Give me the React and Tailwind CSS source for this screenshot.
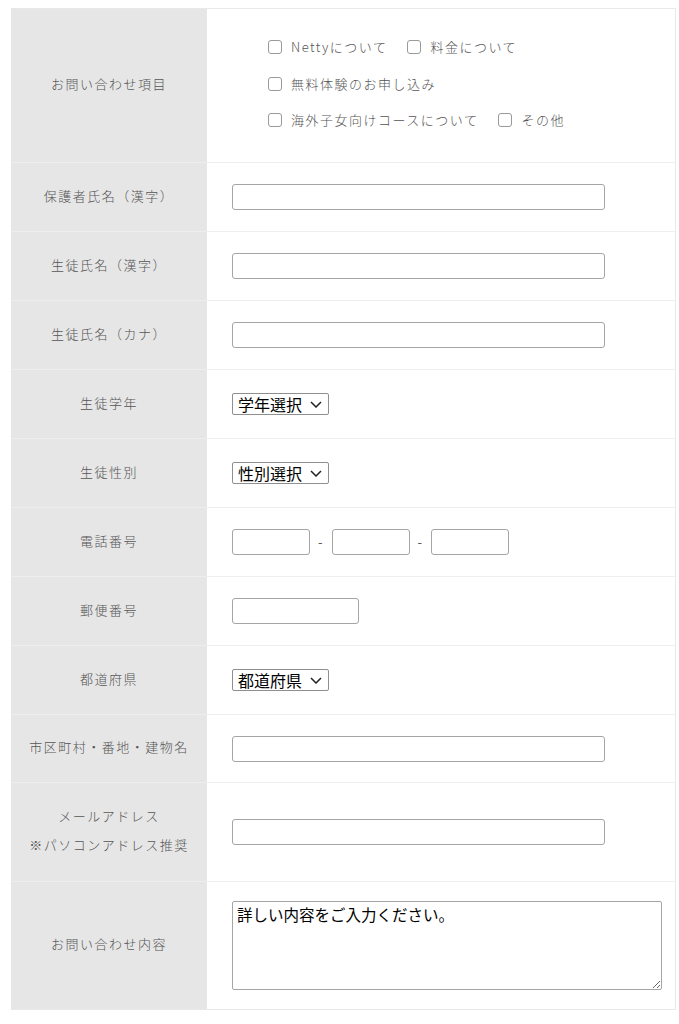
import React from 'react'

const labelFont = { fontFamily: '"Noto Sans CJK JP", "Noto Sans", sans-serif' }

function Check({ label }) {
  return (
    <span className="inline-flex items-center">
      <span className="h-[14px] w-[14px] rounded-[3px] border border-[#9a9a9a] bg-white" />
      <span className="ml-[9px] text-[13px] font-light tracking-[1.5px] text-[#555]">{label}</span>
    </span>
  )
}

function TextBox({ w = 'w-[373px]' }) {
  return <input type="text" className={`${w} h-[26px] rounded-[3px] border border-[#a5a5a5] bg-white px-1 outline-none`} />
}

function FakeSelect({ text }) {
  return (
    <span className="inline-flex h-[22px] w-[97px] items-center rounded-[2px] border border-[#8f8f8f] bg-white pl-[5px] text-[16px] leading-none text-black">
      <span>{text}</span>
      <svg className="ml-[8px]" width="12" height="7" viewBox="0 0 12 7" fill="none" stroke="#222" strokeWidth="1.5">
        <path d="M1 1 6 6 11 1" />
      </svg>
    </span>
  )
}

function Row({ h, label, children, first }) {
  return (
    <div className={`flex ${h} ${first ? '' : 'border-t border-[#eeeeee]'}`}>
      <div className="flex w-[196px] shrink-0 flex-col items-center justify-center bg-[#e6e6e6] pb-[4px] text-[13px] font-light leading-[29px] tracking-[1.5px] text-[#555]">
        {label}
      </div>
      <div className="flex flex-1 items-center bg-white pl-[25px]">{children}</div>
    </div>
  )
}

export default function App() {
  return (
    <div className="min-h-[1024px] bg-white pt-[8px]" style={labelFont}>
      <div className="ml-[11px] w-[665px] border-t border-r border-b border-[#e8e8e8]">
        <Row h="h-[153px]" label="お問い合わせ項目" first>
          <div className="flex flex-col gap-[17px] pb-[4px] pl-[36px]">
            <div className="flex gap-[20px]">
              <Check label="Nettyについて" />
              <Check label="料金について" />
            </div>
            <div className="flex">
              <Check label="無料体験のお申し込み" />
            </div>
            <div className="flex gap-[20px]">
              <Check label="海外子女向けコースについて" />
              <Check label="その他" />
            </div>
          </div>
        </Row>
        <Row h="h-[69px]" label="保護者氏名（漢字）">
          <TextBox />
        </Row>
        <Row h="h-[69px]" label="生徒氏名（漢字）">
          <TextBox />
        </Row>
        <Row h="h-[69px]" label="生徒氏名（カナ）">
          <TextBox />
        </Row>
        <Row h="h-[69px]" label="生徒学年">
          <FakeSelect text="学年選択" />
        </Row>
        <Row h="h-[69px]" label="生徒性別">
          <FakeSelect text="性別選択" />
        </Row>
        <Row h="h-[69px]" label="電話番号">
          <div className="flex items-center">
            <TextBox w="w-[78px]" />
            <span className="ml-[8px] mr-[9px] text-[13px] text-[#555]">-</span>
            <TextBox w="w-[78px]" />
            <span className="ml-[8px] mr-[9px] text-[13px] text-[#555]">-</span>
            <TextBox w="w-[78px]" />
          </div>
        </Row>
        <Row h="h-[69px]" label="郵便番号">
          <TextBox w="w-[127px]" />
        </Row>
        <Row h="h-[69px]" label="都道府県">
          <FakeSelect text="都道府県" />
        </Row>
        <Row h="h-[68px]" label="市区町村・番地・建物名">
          <TextBox />
        </Row>
        <Row h="h-[99px]" label={<><span>メールアドレス</span><span>※パソコンアドレス推奨</span></>}>
          <TextBox />
        </Row>
        <Row h="h-[128px]" label="お問い合わせ内容">
          <textarea
            readOnly
            value="詳しい内容をご入力ください。"
            className="h-[89px] w-[430px] rounded-[2px] border border-[#a5a5a5] bg-white px-[4px] py-[2px] text-[15.5px] leading-[20px] text-black outline-none"
          />
        </Row>
      </div>
    </div>
  )
}
